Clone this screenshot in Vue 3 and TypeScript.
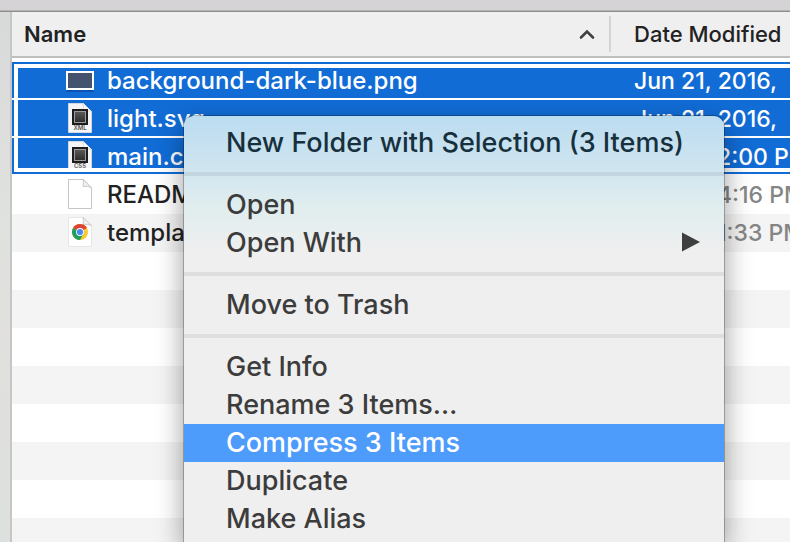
<script setup lang="ts">
type Kind = 'image' | 'xml' | 'css' | 'blank' | 'chrome'

interface FileRow {
  name: string
  modified: string
  kind: Kind
  selected: boolean
}

interface MenuItem {
  label: string
  submenu?: boolean
  active?: boolean
}

const files: FileRow[] = [
  { name: 'background-dark-blue.png', modified: 'Jun 21, 2016, \u200212:00 PM', kind: 'image', selected: true },
  { name: 'light.svg', modified: 'Jun 21, 2016, \u200212:00 PM', kind: 'xml', selected: true },
  { name: 'main.css', modified: 'Today 12:00 PM', kind: 'css', selected: true },
  { name: 'README', modified: 'Today 14:16 PM', kind: 'blank', selected: false },
  { name: 'template.html', modified: 'Today 11:33 PM', kind: 'chrome', selected: false },
]

const groups: MenuItem[][] = [
  [{ label: 'New Folder with Selection (3 Items)' }],
  [{ label: 'Open' }, { label: 'Open With', submenu: true }],
  [{ label: 'Move to Trash' }],
  [
    { label: 'Get Info' },
    { label: 'Rename 3 Items…' },
    { label: 'Compress 3 Items', active: true },
    { label: 'Duplicate' },
    { label: 'Make Alias' },
  ],
]
</script>

<template>
  <div class="window">
    <div class="toolbar"></div>
    <div class="body">
      <div class="sidebar"></div>
      <main class="list">
        <table class="files">
          <colgroup>
            <col class="col-name" />
            <col />
          </colgroup>
          <thead>
            <tr>
              <th class="sorted" aria-sort="ascending">
                <div class="head">
                  <span>Name</span>
                  <svg class="chevron" width="16" height="12" viewBox="0 0 16 12" aria-hidden="true">
                    <path d="M2 9.500 8 3.500l6 6" fill="none" stroke="#404040" stroke-width="2.6" stroke-linecap="round" />
                  </svg>
                </div>
              </th>
              <th><div class="head date-head">Date Modified</div></th>
            </tr>
          </thead>
          <tbody>
            <tr v-for="file in files" :key="file.name" :class="{ selected: file.selected }">
              <td>
                <div class="name-cell">
                  <svg v-if="file.kind === 'image'" class="icon" width="32" height="32" viewBox="0 0 32 32" aria-hidden="true">
                    <rect x="2" y="8" width="28" height="19" fill="#04388a" opacity=".45" />
                    <rect x="2" y="6" width="28" height="19" fill="#fff" />
                    <rect x="4" y="8" width="24" height="15" fill="#46536f" />
                  </svg>
                  <svg v-else class="icon" width="32" height="32" viewBox="0 1 32 32" aria-hidden="true">
                    <defs>
                      <linearGradient :id="`chip-${file.kind}`" x1="0" y1="0" x2="0" y2="1">
                        <stop offset="0" stop-color="#5a5a5a" />
                        <stop offset="1" stop-color="#2c2c2c" />
                      </linearGradient>
                    </defs>
                    <path d="M4.500 1.500h15l8 8v21h-23z" :fill="file.selected ? '#f6f6f6' : '#fff'" :stroke="file.kind === 'blank' ? '#c6c6c6' : file.selected ? '#d4d8df' : '#e6e6e6'" />
                    <path d="M19 1.500q1 3 0 7 4-1 8.500 1z" :fill="file.selected ? '#fff' : '#f2f2f2'" :stroke="file.selected ? '#dcdcdc' : '#c9c9c9'" />
                    <g v-if="file.kind === 'xml' || file.kind === 'css'">
                      <rect x="8" y="7" width="16" height="16" fill="#1d1d1d" />
                      <rect x="10.500" y="9.500" width="11" height="11" :fill="`url(#chip-${file.kind})`" stroke="#9c9c9c" />
                      <text x="16" y="28" text-anchor="middle" class="badge">{{ file.kind.toUpperCase() }}</text>
                    </g>
                    <g v-if="file.kind === 'chrome'">
                      <circle cx="16" cy="16" r="8" fill="#f9c935" />
                      <path d="M16 16 9.070 12A8 8 0 0 1 22.930 12z" fill="#dc4437" />
                      <path d="M9.070 12A8 8 0 0 0 16 24L19.500 18 16 16z" fill="#1fa15d" />
                      <circle cx="16" cy="16" r="3.900" fill="#fff" />
                      <circle cx="16" cy="16" r="3.100" fill="#4a8af4" />
                    </g>
                  </svg>
                  <span>{{ file.name }}</span>
                </div>
              </td>
              <td class="date">{{ file.modified }}</td>
            </tr>
          </tbody>
        </table>
        <div class="empty-rows"></div>
      </main>
    </div>

    <div class="menu" role="menu">
      <div v-for="(group, i) in groups" :key="i" class="group" role="group">
        <button
          v-for="item in group"
          :key="item.label"
          type="button"
          role="menuitem"
          class="item"
          :class="{ active: item.active }"
        >
          <span>{{ item.label }}</span>
          <svg v-if="item.submenu" width="18" height="20" viewBox="0 0 18 20" aria-hidden="true">
            <path d="M0 .5v19L18 10z" fill="#3e3e3e" />
          </svg>
        </button>
      </div>
    </div>
  </div>
</template>

<style>
body {
  margin: 0;
  overflow: hidden;
}
</style>

<style scoped>
.window {
  position: relative;
  display: flex;
  flex-direction: column;
  height: 100vh;
  overflow: hidden;
  background: #fff;
  color: #222;
  font-family: Inter, "Liberation Sans", sans-serif;
  font-size: 24px;
}

.toolbar {
  box-sizing: border-box;
  height: 12px;
  flex: none;
  background: #d5d3d5;
  border-bottom: 1px solid #8e8e8e;
  box-shadow: inset 0 -1px #b4b3b4;
}

.body {
  display: flex;
  flex: 1;
  min-height: 0;
}

.sidebar {
  width: 10px;
  flex: none;
  background: linear-gradient(#d8dada, #dfe2de 40%, #e1e0de 60%, #dde1dd);
  border-right: 2px solid #c6c6c6;
}

.list {
  display: flex;
  flex: 1;
  flex-direction: column;
  min-width: 0;
}

.files {
  width: 100%;
  flex: none;
  table-layout: fixed;
  border-collapse: separate;
  border-spacing: 0;
}

.col-name {
  width: 77%;
}

th,
td {
  padding: 0;
  overflow: hidden;
  text-align: left;
  white-space: nowrap;
  text-overflow: clip;
}

th {
  height: 44px;
  background: #efefef;
  border-bottom: 2px solid #bfbfbf;
  font-size: 22px;
  font-weight: 450;
}

.sorted {
  font-weight: 600;
}

.head {
  display: flex;
  align-items: center;
  justify-content: space-between;
  height: 36px;
  padding: 0 14px 0 12px;
}

.sorted .head {
  border-right: 2px solid #d4d4d4;
}

.date-head {
  padding: 0 0 0 23px;
}

tbody::before {
  content: "";
  display: block;
  height: 4px;
}

tbody tr {
  height: 38px;
}

tbody tr:nth-child(odd) {
  background: #fff;
}

tbody tr:nth-child(5) {
  background: #f4f4f4;
}

tbody td {
  height: 38px;
  font-size: 24px;
  font-weight: 450;
  line-height: 40px;
}

tbody .date {
  padding-left: 23px;
  color: #858585;
  font-size: 23px;
  line-height: 38px;
}

tbody .selected,
tbody .selected .date {
  color: #fff;
}

tbody .selected {
  --blue: linear-gradient(#116cd6, #116cd6);
  --white: linear-gradient(#fff, #fff);
  background:
    var(--white) 0 36px / 100% 2px no-repeat,
    var(--blue) 0 0 / 2px 100% no-repeat,
    var(--white) 2px 0 / 4px 100% no-repeat,
    #116cd6;
}

tbody .selected:first-child {
  background:
    var(--white) 0 36px / 100% 2px no-repeat,
    var(--blue) 0 0 / 100% 2px no-repeat,
    var(--blue) 0 0 / 2px 100% no-repeat,
    var(--white) 2px 0 / 4px 100% no-repeat,
    var(--white) 0 2px / 100% 4px no-repeat,
    #116cd6;
}

tbody .selected:nth-child(3) {
  background:
    var(--white) 0 36px / 100% 2px no-repeat,
    var(--blue) 0 34px / 100% 2px no-repeat,
    var(--blue) 0 0 / 2px 100% no-repeat,
    var(--white) 2px 0 / 4px 100% no-repeat,
    var(--white) 0 30px / 100% 4px no-repeat,
    #116cd6;
}

.selected:nth-child(3) .name-cell {
  clip-path: inset(0 0 8px);
}

.name-cell {
  display: flex;
  align-items: center;
  gap: 11px;
  height: 38px;
  padding-left: 52px;
}

.icon {
  flex: none;
}

.badge {
  fill: #555;
  font-size: 6px;
  font-weight: 600;
}

.empty-rows {
  flex: 1;
  background: repeating-linear-gradient(#fff 0 38px, #f4f4f4 38px 76px);
}

.menu {
  position: absolute;
  top: 116px;
  right: 66px;
  bottom: 0;
  left: 184px;
  padding-top: 8px;
  background: linear-gradient(#bbdcf0, #d1e6f0 56px, #e0edee 90px, #efefef 136px);
  border-radius: 10px 10px 0 0;
  box-shadow: 0 0 0 1px rgba(0, 0, 0, 0.25), 0 10px 28px rgba(0, 0, 0, 0.4);
}

.group + .group {
  margin-top: 10px;
  padding-top: 10px;
  border-top: 4px solid rgba(0, 0, 0, 0.07);
}

.item {
  display: flex;
  align-items: center;
  justify-content: space-between;
  width: 100%;
  height: 38px;
  padding: 0 24px 2px 42px;
  border: 0;
  background: none;
  color: #3c3c3c;
  font: inherit;
  font-size: 27px;
  font-weight: 450;
  text-align: left;
  white-space: nowrap;
}

.group:first-child .item {
  color: #17303d;
}

.item.active {
  background: #4d9bfb;
  color: #fff;
}
</style>
